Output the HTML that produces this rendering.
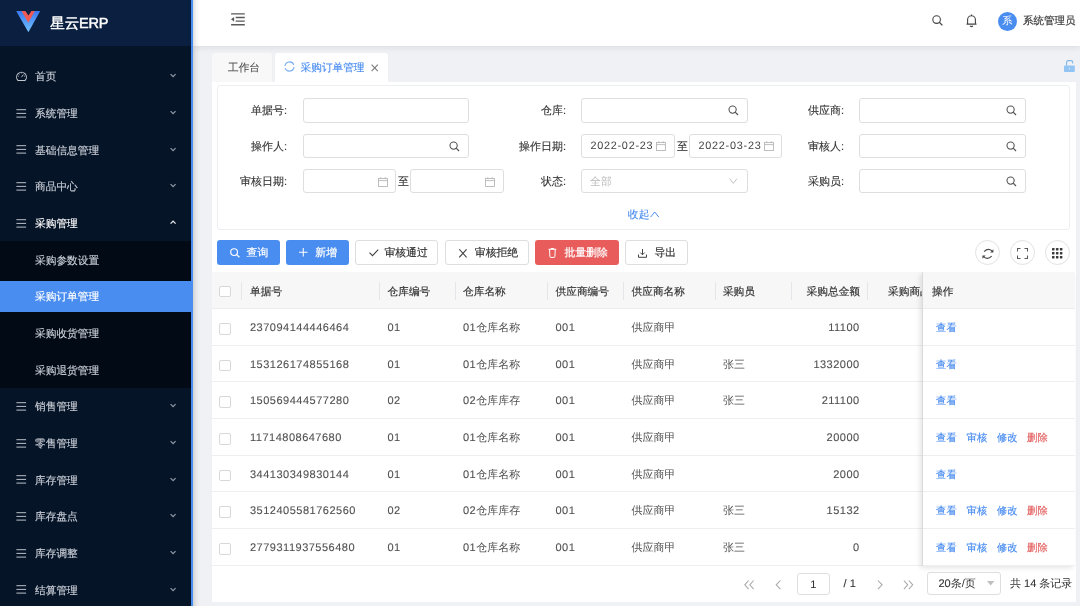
<!DOCTYPE html><html><head><meta charset="utf-8"><style>
*{box-sizing:border-box;margin:0;padding:0}
html,body{width:1080px;height:606px;overflow:hidden;background:#eff1f4;font-family:"Liberation Sans",sans-serif;color:#333;font-size:10.85px;text-rendering:geometricPrecision}
.d{letter-spacing:0.5px;font-size:11px;-webkit-text-stroke:0.1px currentColor}
.abs{position:absolute}
.nw{white-space:nowrap}
#side{position:absolute;left:0;top:0;width:191px;height:606px;background:#061428}
#logo{position:absolute;left:0;top:0;width:191px;height:46px;background:#0b1f41}
#logo .t{position:absolute;left:50.3px;top:13.6px;font-size:14.5px;line-height:20px;color:#fff;-webkit-text-stroke:0.45px #fff;white-space:nowrap;letter-spacing:-0.15px}
#bline{position:absolute;left:191px;top:0;width:2px;height:606px;background:#4a8df0}
#bshadow{position:absolute;left:193px;top:0;width:7px;height:606px;background:linear-gradient(90deg,rgba(0,0,0,0.13),rgba(0,0,0,0.04) 50%,rgba(0,0,0,0))}
.mi{position:absolute;left:0;width:191px;height:36.67px;color:#c9ced6}
.mi .ic{position:absolute;left:16px;top:14.4px}
.mi .tx{position:absolute;left:35px;top:1.7px;line-height:36.67px;font-size:10.7px;white-space:nowrap;-webkit-text-stroke:0.15px currentColor}
.mi .ch{position:absolute;left:170px;top:15.5px}
#sub{position:absolute;left:0;top:241px;width:191px;height:146.67px;background:#020a16}
#hl{position:absolute;left:0;top:281px;width:191px;height:30.5px;background:#4a8df0}
#hdr{position:absolute;left:193px;top:0;width:887px;height:46px;background:#fff;box-shadow:0 1px 7px rgba(0,0,0,0.10)}
.tab{position:absolute;top:53px;height:29px;line-height:30.4px;font-size:10.65px;border-radius:3px 3px 0 0}
#wrap{position:absolute;left:211.5px;top:82px;width:864px;height:520px;background:#fff}
#form{position:absolute;left:217px;top:85px;width:853px;height:145px;border:1px solid #eceef1;border-radius:3px;background:#fff}
.lbl{position:absolute;font-size:11px;color:#333;line-height:26.6px;white-space:nowrap;-webkit-text-stroke:0.12px #333}
.inp{position:absolute;height:24.5px;border:1px solid #dedede;border-radius:3px;background:#fff;font-size:10.85px;line-height:22px;color:#555}
.btn{position:absolute;top:240.3px;height:24.5px;border-radius:3px;font-size:10.85px;line-height:24.5px;white-space:nowrap}
.btn span{-webkit-text-stroke:0.2px currentColor}
.bp{background:#4a8df0;color:#fff}
.bd{background:#fff;border:1px solid #dedede;color:#333;line-height:22.5px}
.br{background:#e85c5c;color:#fff}
#thead{position:absolute;left:212px;top:272.2px;width:863px;height:36.8px;background:#f7f7f8;border-bottom:1px solid #ececec}
.th{position:absolute;top:1.7px;line-height:36.8px;font-size:10.7px;color:#333;-webkit-text-stroke:0.18px #333;white-space:nowrap}
.dv{position:absolute;top:9.8px;width:1px;height:17.6px;background:#e4e6ea}
.row{position:absolute;left:212px;width:863px;height:36.67px;border-bottom:1px solid #efefef;background:#fff}
.td{position:absolute;top:1px;line-height:37px;font-size:11px;color:#505050;white-space:nowrap}
.cb{position:absolute;width:12px;height:12px;border:1px solid #d8d8d8;border-radius:2px;background:#fff}
.lk{font-size:10.3px !important;color:#4a8df0;-webkit-text-stroke:0.15px #4a8df0}
.lr{font-size:10.3px !important;color:#e35b5b;-webkit-text-stroke:0.15px #e35b5b}
</style></head><body><div id="root" style="position:absolute;left:0;top:0;width:1080px;height:606px;will-change:transform">
<div id="side">
<div id="logo"><svg class="abs" style="left:16px;top:11.4px" width="25" height="22" viewBox="0 0 25 22">
<defs><linearGradient id="g1" x1="0" y1="0" x2="0" y2="1"><stop offset="0" stop-color="#3a78f0"/><stop offset="1" stop-color="#72c4ff"/></linearGradient></defs>
<path d="M0.15 0 H24.2 L12.4 21.3 Z" fill="url(#g1)"/><path d="M5.5 0 H18.85 L12.3 11.8 Z" fill="#ef5a55"/><path d="M9.4 0 H15.4 L12.4 4.4 Z" fill="#0b1f41"/></svg>
<div class="t">星云ERP</div></div>
<div id="sub"></div><div id="hl"></div>
<div class="mi" style="top:57.70px"><svg class="ic" style="top:13.2px" width="12" height="11" viewBox="0 0 12 11"><path d="M1.9 9.4A4.9 4.9 0 1 1 9.1 9.4Z" fill="none" stroke="#c4c9d1" stroke-width="1.05"/><path d="M5.5 6.2L7.4 3.5M5.5 1.3V2.3M1.8 5.2H2.8M8.2 5.2H9.2M2.9 2.6L3.5 3.2" stroke="#c4c9d1" stroke-width="0.9"/></svg><div class="tx" style="">首页</div><svg class="ch" width="7" height="5" viewBox="0 0 7 5"><path d="M0.6 1.1L3.1 3.6L5.6 1.1" fill="none" stroke="#8d96a3" stroke-width="1.3"/></svg></div>
<div class="mi" style="top:94.37px"><svg class="ic" width="11" height="10" viewBox="0 0 11 10"><path d="M0.4 0.7H10.1M0.4 4.4H10.1M0.4 8.1H10.1" stroke="#c4c9d1" stroke-width="0.95"/></svg><div class="tx" style="">系统管理</div><svg class="ch" width="7" height="5" viewBox="0 0 7 5"><path d="M0.6 1.1L3.1 3.6L5.6 1.1" fill="none" stroke="#8d96a3" stroke-width="1.3"/></svg></div>
<div class="mi" style="top:131.04px"><svg class="ic" width="11" height="10" viewBox="0 0 11 10"><path d="M0.4 0.7H10.1M0.4 4.4H10.1M0.4 8.1H10.1" stroke="#c4c9d1" stroke-width="0.95"/></svg><div class="tx" style="">基础信息管理</div><svg class="ch" width="7" height="5" viewBox="0 0 7 5"><path d="M0.6 1.1L3.1 3.6L5.6 1.1" fill="none" stroke="#8d96a3" stroke-width="1.3"/></svg></div>
<div class="mi" style="top:167.71px"><svg class="ic" width="11" height="10" viewBox="0 0 11 10"><path d="M0.4 0.7H10.1M0.4 4.4H10.1M0.4 8.1H10.1" stroke="#c4c9d1" stroke-width="0.95"/></svg><div class="tx" style="">商品中心</div><svg class="ch" width="7" height="5" viewBox="0 0 7 5"><path d="M0.6 1.1L3.1 3.6L5.6 1.1" fill="none" stroke="#8d96a3" stroke-width="1.3"/></svg></div>
<div class="mi" style="top:204.38px"><svg class="ic" width="11" height="10" viewBox="0 0 11 10"><path d="M0.4 0.7H10.1M0.4 4.4H10.1M0.4 8.1H10.1" stroke="#c4c9d1" stroke-width="0.95"/></svg><div class="tx" style="color:#fff;">采购管理</div><svg class="ch" width="7" height="5" viewBox="0 0 7 5"><path d="M0.6 3.6L3.1 1.1L5.6 3.6" fill="none" stroke="#e6e9ee" stroke-width="1.3"/></svg></div>
<div class="mi" style="top:241.05px"><div class="tx" style="">采购参数设置</div></div>
<div class="mi" style="top:277.72px"><div class="tx" style="color:#fff;">采购订单管理</div></div>
<div class="mi" style="top:314.39px"><div class="tx" style="">采购收货管理</div></div>
<div class="mi" style="top:351.06px"><div class="tx" style="">采购退货管理</div></div>
<div class="mi" style="top:387.73px"><svg class="ic" width="11" height="10" viewBox="0 0 11 10"><path d="M0.4 0.7H10.1M0.4 4.4H10.1M0.4 8.1H10.1" stroke="#c4c9d1" stroke-width="0.95"/></svg><div class="tx" style="">销售管理</div><svg class="ch" width="7" height="5" viewBox="0 0 7 5"><path d="M0.6 1.1L3.1 3.6L5.6 1.1" fill="none" stroke="#8d96a3" stroke-width="1.3"/></svg></div>
<div class="mi" style="top:424.40px"><svg class="ic" width="11" height="10" viewBox="0 0 11 10"><path d="M0.4 0.7H10.1M0.4 4.4H10.1M0.4 8.1H10.1" stroke="#c4c9d1" stroke-width="0.95"/></svg><div class="tx" style="">零售管理</div><svg class="ch" width="7" height="5" viewBox="0 0 7 5"><path d="M0.6 1.1L3.1 3.6L5.6 1.1" fill="none" stroke="#8d96a3" stroke-width="1.3"/></svg></div>
<div class="mi" style="top:461.07px"><svg class="ic" width="11" height="10" viewBox="0 0 11 10"><path d="M0.4 0.7H10.1M0.4 4.4H10.1M0.4 8.1H10.1" stroke="#c4c9d1" stroke-width="0.95"/></svg><div class="tx" style="">库存管理</div><svg class="ch" width="7" height="5" viewBox="0 0 7 5"><path d="M0.6 1.1L3.1 3.6L5.6 1.1" fill="none" stroke="#8d96a3" stroke-width="1.3"/></svg></div>
<div class="mi" style="top:497.74px"><svg class="ic" width="11" height="10" viewBox="0 0 11 10"><path d="M0.4 0.7H10.1M0.4 4.4H10.1M0.4 8.1H10.1" stroke="#c4c9d1" stroke-width="0.95"/></svg><div class="tx" style="">库存盘点</div><svg class="ch" width="7" height="5" viewBox="0 0 7 5"><path d="M0.6 1.1L3.1 3.6L5.6 1.1" fill="none" stroke="#8d96a3" stroke-width="1.3"/></svg></div>
<div class="mi" style="top:534.41px"><svg class="ic" width="11" height="10" viewBox="0 0 11 10"><path d="M0.4 0.7H10.1M0.4 4.4H10.1M0.4 8.1H10.1" stroke="#c4c9d1" stroke-width="0.95"/></svg><div class="tx" style="">库存调整</div><svg class="ch" width="7" height="5" viewBox="0 0 7 5"><path d="M0.6 1.1L3.1 3.6L5.6 1.1" fill="none" stroke="#8d96a3" stroke-width="1.3"/></svg></div>
<div class="mi" style="top:571.08px"><svg class="ic" width="11" height="10" viewBox="0 0 11 10"><path d="M0.4 0.7H10.1M0.4 4.4H10.1M0.4 8.1H10.1" stroke="#c4c9d1" stroke-width="0.95"/></svg><div class="tx" style="">结算管理</div><svg class="ch" width="7" height="5" viewBox="0 0 7 5"><path d="M0.6 1.1L3.1 3.6L5.6 1.1" fill="none" stroke="#8d96a3" stroke-width="1.3"/></svg></div>
</div>
<div id="hdr">
<svg class="abs" style="left:37.5px;top:13px" width="15" height="13" viewBox="0 0 15 13"><path d="M0.1 0.9H13.8M4.7 4.5H13.8M4.7 8.1H13.8M0.1 11.8H13.8" stroke="#5a5a5a" stroke-width="1.4"/><path d="M0 6.35L3.1 4.1V8.6Z" fill="#5a5a5a"/></svg>
<svg class="abs" style="left:738.5px;top:15.3px" width="12" height="12" viewBox="0 0 12 12"><circle cx="4.6" cy="4.6" r="3.8" fill="none" stroke="#444" stroke-width="1.1"/><path d="M7.3 7.3L10.4 10.4" stroke="#444" stroke-width="1.3"/></svg>
<svg class="abs" style="left:772.7px;top:14px" width="11" height="14" viewBox="0 0 11 14"><path d="M1.6 10V5.6A3.9 3.9 0 0 1 9.4 5.6V10ZM0.5 10.1H10.5M5.5 0.6V1.7" fill="none" stroke="#444" stroke-width="1.1"/><path d="M4.1 11.9Q5.5 13.2 6.9 11.9" fill="none" stroke="#444" stroke-width="1.2"/></svg>
<div class="abs" style="left:805px;top:12px;width:19px;height:19px;border-radius:50%;background:#4a8df0;color:#fff;font-size:10.3px;line-height:19px;text-align:center">系</div>
<div class="abs nw" style="left:830px;top:12px;line-height:19px;font-size:10.5px;color:#3a3a3a;-webkit-text-stroke:0.2px #3a3a3a">系统管理员</div>
</div>
<div id="bline"></div><div id="bshadow"></div>
<div class="tab" style="left:212px;width:59.5px;background:#f8f8f8;color:#505050"><span class="abs nw" style="left:16px;top:0.3px;-webkit-text-stroke:0.12px #505050">工作台</span></div>
<div class="tab" style="left:275px;width:113px;background:#fff;color:#4a8df0"><svg class="abs" style="left:8.6px;top:8.4px" width="11" height="11" viewBox="0 0 11 11"><path d="M0.92 5.1A4.6 4.6 0 0 1 9.82 3.93M10.08 5.9A4.6 4.6 0 0 1 1.18 7.07" fill="none" stroke="#76aaf3" stroke-width="1.05"/></svg><span class="abs nw" style="left:25.6px;top:0.3px;-webkit-text-stroke:0.15px #4a8df0">采购订单管理</span><svg class="abs" style="left:95.6px;top:10.8px" width="8" height="8" viewBox="0 0 8 8"><path d="M0.6 0.6L6.8 7.2M6.8 0.6L0.6 7.2" stroke="#7a7a7a" stroke-width="1.1"/></svg></div>
<svg class="abs" style="left:1064px;top:59.6px" width="12" height="13" viewBox="0 0 12 13"><rect x="0" y="5.4" width="10.8" height="6.6" rx="0.8" fill="#93c5f4"/><path d="M2.6 5.6V2.3Q2.6 0.6 4.3 0.6H7Q8.7 0.6 8.7 2.3V3.4" fill="none" stroke="#7fb6e8" stroke-width="1.1"/><rect x="4.9" y="7.9" width="1.1" height="1.6" fill="#d6e9fb"/></svg>
<div id="wrap"></div>
<div id="form"></div>
<div class="lbl" style="right:793.0px;top:98.4px">单据号:</div>
<div class="inp" style="left:302.5px;top:98.4px;width:166.9px"></div>
<div class="lbl" style="right:793.0px;top:133.7px">操作人:</div>
<div class="inp" style="left:302.5px;top:133.7px;width:166.9px"><svg class="abs" style="right:8px;top:6px" width="11" height="11" viewBox="0 0 11 11"><circle cx="4.6" cy="4.6" r="3.6" fill="none" stroke="#555" stroke-width="1.1"/><path d="M7.2 7.2L10 10" stroke="#555" stroke-width="1.2"/></svg></div>
<div class="lbl" style="right:793.0px;top:168.9px">审核日期:</div>
<div class="inp" style="left:302.5px;top:168.9px;width:93.9px"><svg class="abs" style="right:7.8px;top:6.8px" width="10" height="10" viewBox="0 0 10 10"><rect x="0.5" y="1.5" width="9" height="8" fill="none" stroke="#b8b8b8" stroke-width="0.9"/><path d="M0.5 3.6H9.5M2.8 0.2V2.2M7.2 0.2V2.2" stroke="#b8b8b8" stroke-width="0.9"/></svg></div>
<div class="lbl" style="left:398px;top:168.9px">至</div>
<div class="inp" style="left:410.3px;top:168.9px;width:93.9px"><svg class="abs" style="right:7.8px;top:6.8px" width="10" height="10" viewBox="0 0 10 10"><rect x="0.5" y="1.5" width="9" height="8" fill="none" stroke="#b8b8b8" stroke-width="0.9"/><path d="M0.5 3.6H9.5M2.8 0.2V2.2M7.2 0.2V2.2" stroke="#b8b8b8" stroke-width="0.9"/></svg></div>
<div class="lbl" style="right:514.0px;top:98.4px">仓库:</div>
<div class="inp" style="left:581.1px;top:98.4px;width:166.7px"><svg class="abs" style="right:8px;top:6px" width="11" height="11" viewBox="0 0 11 11"><circle cx="4.6" cy="4.6" r="3.6" fill="none" stroke="#555" stroke-width="1.1"/><path d="M7.2 7.2L10 10" stroke="#555" stroke-width="1.2"/></svg></div>
<div class="lbl" style="right:514.0px;top:133.7px">操作日期:</div>
<div class="inp" style="left:581.1px;top:133.7px;width:93.6px"><span class="abs nw" style="left:8.3px;top:0.8px;color:#444;letter-spacing:0.75px">2022-02-23</span><svg class="abs" style="right:7.8px;top:6.8px" width="10" height="10" viewBox="0 0 10 10"><rect x="0.5" y="1.5" width="9" height="8" fill="none" stroke="#b8b8b8" stroke-width="0.9"/><path d="M0.5 3.6H9.5M2.8 0.2V2.2M7.2 0.2V2.2" stroke="#b8b8b8" stroke-width="0.9"/></svg></div>
<div class="lbl" style="left:677px;top:133.7px">至</div>
<div class="inp" style="left:689.2px;top:133.7px;width:93.3px"><span class="abs nw" style="left:8.3px;top:0.8px;color:#444;letter-spacing:0.75px">2022-03-23</span><svg class="abs" style="right:7.8px;top:6.8px" width="10" height="10" viewBox="0 0 10 10"><rect x="0.5" y="1.5" width="9" height="8" fill="none" stroke="#b8b8b8" stroke-width="0.9"/><path d="M0.5 3.6H9.5M2.8 0.2V2.2M7.2 0.2V2.2" stroke="#b8b8b8" stroke-width="0.9"/></svg></div>
<div class="lbl" style="right:514.0px;top:168.9px">状态:</div>
<div class="inp" style="left:581.1px;top:168.9px;width:166.7px"><span class="abs nw" style="left:8px;top:0.8px;color:#bbb">全部</span><svg class="abs" style="right:9px;top:8.2px" width="9" height="7" viewBox="0 0 9 7"><path d="M0.6 0.6L4.3 5.4L8 0.6" fill="none" stroke="#bbb" stroke-width="0.9"/></svg></div>
<div class="lbl" style="right:236.0px;top:98.4px">供应商:</div>
<div class="inp" style="left:859.2px;top:98.4px;width:167.3px"><svg class="abs" style="right:8px;top:6px" width="11" height="11" viewBox="0 0 11 11"><circle cx="4.6" cy="4.6" r="3.6" fill="none" stroke="#555" stroke-width="1.1"/><path d="M7.2 7.2L10 10" stroke="#555" stroke-width="1.2"/></svg></div>
<div class="lbl" style="right:236.0px;top:133.7px">审核人:</div>
<div class="inp" style="left:859.2px;top:133.7px;width:167.3px"><svg class="abs" style="right:8px;top:6px" width="11" height="11" viewBox="0 0 11 11"><circle cx="4.6" cy="4.6" r="3.6" fill="none" stroke="#555" stroke-width="1.1"/><path d="M7.2 7.2L10 10" stroke="#555" stroke-width="1.2"/></svg></div>
<div class="lbl" style="right:236.0px;top:168.9px">采购员:</div>
<div class="inp" style="left:859.2px;top:168.9px;width:167.3px"><svg class="abs" style="right:8px;top:6px" width="11" height="11" viewBox="0 0 11 11"><circle cx="4.6" cy="4.6" r="3.6" fill="none" stroke="#555" stroke-width="1.1"/><path d="M7.2 7.2L10 10" stroke="#555" stroke-width="1.2"/></svg></div>
<div class="abs nw" style="left:627.8px;top:207.2px;line-height:16px;color:#4a8df0;font-size:10.85px;-webkit-text-stroke:0.1px #4a8df0">收起</div><svg class="abs" style="left:649.8px;top:210.8px" width="10" height="7" viewBox="0 0 10 7"><path d="M0.5 6.2L4.7 1L8.9 6.2" fill="none" stroke="#4a8df0" stroke-width="1"/></svg>
<div class="btn bp" style="left:217.4px;width:62.5px"><svg class="abs" style="left:12.5px;top:7.8px" width="11" height="10" viewBox="0 0 11 10"><circle cx="4.1" cy="4.1" r="3.4" fill="none" stroke="#fff" stroke-width="1.15"/><path d="M6.6 6.6L9.4 9.3" stroke="#fff" stroke-width="1.25"/></svg><span class="abs" style="left:29.2px;top:0.8px">查询</span></div>
<div class="btn bp" style="left:286.1px;width:62.5px"><svg class="abs" style="left:13.2px;top:7.9px" width="9" height="9" viewBox="0 0 9 9"><path d="M4.25 0V8.5M0 4.25H8.5" stroke="#fff" stroke-width="1.05"/></svg><span class="abs" style="left:29.2px;top:0.8px">新增</span></div>
<div class="btn bd" style="left:355.0px;width:83.4px"><svg class="abs" style="left:12.5px;top:7.5px" width="10" height="8" viewBox="0 0 10 8"><path d="M0.5 3.6L3.5 6.6L9.2 0.6" fill="none" stroke="#444" stroke-width="1.1"/></svg><span class="abs" style="left:28.4px;top:0.8px">审核通过</span></div>
<div class="btn bd" style="left:445.4px;width:83.3px"><svg class="abs" style="left:12.4px;top:7.5px" width="8" height="9" viewBox="0 0 8 9"><path d="M0.3 0.3L7.6 8.3M7.6 0.3L0.3 8.3" stroke="#444" stroke-width="1.05"/></svg><span class="abs" style="left:28.4px;top:0.8px">审核拒绝</span></div>
<div class="btn br" style="left:535.2px;width:83.8px"><svg class="abs" style="left:13px;top:8px" width="9" height="10" viewBox="0 0 9 10"><path d="M0.5 1.3H8.3M1.6 1.3L1.9 8.7Q2 9.4 2.7 9.4H6.1Q6.8 9.4 6.9 8.7L7.2 1.3M3 1.3V0.5H5.8V1.3" fill="none" stroke="#fff" stroke-width="1"/></svg><span class="abs" style="left:29.2px;top:0.8px">批量删除</span></div>
<div class="btn bd" style="left:625.0px;width:62.5px"><svg class="abs" style="left:12px;top:7.6px" width="10" height="9" viewBox="0 0 10 9"><path d="M4.5 0V5.6M2.3 3.6L4.5 5.8L6.7 3.6M0.5 5.5V8.3H8.5V5.5" fill="none" stroke="#444" stroke-width="1"/></svg><span class="abs" style="left:28.5px;top:0.8px">导出</span></div>
<div class="abs" style="left:974.8px;top:240px;width:25px;height:25px;border:1px solid #e2e2e2;border-radius:50%"><div class="abs" style="left:11.5px;top:11.5px"><svg class="abs" style="left:-5.3px;top:-4.9px" width="13" height="13" viewBox="0 0 13 13"><path d="M2.1 3.7Q6 -0.4 10 2.9M9.7 8.1Q5.8 12.2 1.8 8.9" fill="none" stroke="#4a4a4a" stroke-width="1.15"/><path d="M11.4 1.2V4.5H8.1ZM0.4 10.8V7.5H3.7Z" fill="#4a4a4a"/></svg></div></div>
<div class="abs" style="left:1010.0px;top:240px;width:25px;height:25px;border:1px solid #e2e2e2;border-radius:50%"><div class="abs" style="left:11.5px;top:11.5px"><svg class="abs" style="left:-5.5px;top:-4.6px" width="12" height="12" viewBox="0 0 12 12"><path d="M0.5 3.5V0.5H3.5M7.5 0.5H10.5V3.5M10.5 7.5V10.5H7.5M3.5 10.5H0.5V7.5" fill="none" stroke="#5a5a5a" stroke-width="1.05"/></svg></div></div>
<div class="abs" style="left:1044.5px;top:240px;width:25px;height:25px;border:1px solid #e2e2e2;border-radius:50%"><div class="abs" style="left:11.5px;top:11.5px"><svg class="abs" style="left:-5.4px;top:-5.0px" width="11" height="11" viewBox="0 0 11 11"><rect x="0.00" y="0.00" width="2.5" height="2.5" rx="0.4" fill="#3a3a3a"/><rect x="0.00" y="3.95" width="2.5" height="2.5" rx="0.4" fill="#3a3a3a"/><rect x="0.00" y="7.90" width="2.5" height="2.5" rx="0.4" fill="#3a3a3a"/><rect x="3.95" y="0.00" width="2.5" height="2.5" rx="0.4" fill="#3a3a3a"/><rect x="3.95" y="3.95" width="2.5" height="2.5" rx="0.4" fill="#3a3a3a"/><rect x="3.95" y="7.90" width="2.5" height="2.5" rx="0.4" fill="#3a3a3a"/><rect x="7.90" y="0.00" width="2.5" height="2.5" rx="0.4" fill="#3a3a3a"/><rect x="7.90" y="3.95" width="2.5" height="2.5" rx="0.4" fill="#3a3a3a"/><rect x="7.90" y="7.90" width="2.5" height="2.5" rx="0.4" fill="#3a3a3a"/></svg></div></div>
<div id="thead">
<div class="cb" style="left:7.2px;top:13.6px;width:11.6px;height:11.6px"></div>
<div class="dv" style="left:29.2px"></div>
<div class="dv" style="left:166.9px"></div>
<div class="dv" style="left:242.8px"></div>
<div class="dv" style="left:335.3px"></div>
<div class="dv" style="left:411.0px"></div>
<div class="dv" style="left:503.2px"></div>
<div class="dv" style="left:579.0px"></div>
<div class="dv" style="left:655.2px"></div>
<div class="th" style="left:38.0px">单据号</div>
<div class="th" style="left:175.5px">仓库编号</div>
<div class="th" style="left:251.0px">仓库名称</div>
<div class="th" style="left:343.5px">供应商编号</div>
<div class="th" style="left:419.5px">供应商名称</div>
<div class="th" style="left:510.9px">采购员</div>
<div class="th" style="right:215.0px">采购总金额</div>
<div class="th" style="left:676.0px">采购商品</div>
</div>
<div class="row" style="top:309.00px"><div class="cb" style="left:7.2px;top:14px;width:11.6px;height:11.6px"></div><div class="td" style="left:38.0px"><span class="d">237094144446464</span></div><div class="td" style="left:175.5px"><span class="d">01</span></div><div class="td" style="left:251.0px"><span class="d">01</span>仓库名称</div><div class="td" style="left:343.5px"><span class="d">001</span></div><div class="td" style="left:419.5px">供应商甲</div><div class="td" style="left:510.9px"></div><div class="td d" style="right:215.3px">11100</div></div>
<div class="row" style="top:345.67px"><div class="cb" style="left:7.2px;top:14px;width:11.6px;height:11.6px"></div><div class="td" style="left:38.0px"><span class="d">153126174855168</span></div><div class="td" style="left:175.5px"><span class="d">01</span></div><div class="td" style="left:251.0px"><span class="d">01</span>仓库名称</div><div class="td" style="left:343.5px"><span class="d">001</span></div><div class="td" style="left:419.5px">供应商甲</div><div class="td" style="left:510.9px">张三</div><div class="td d" style="right:215.3px">1332000</div></div>
<div class="row" style="top:382.34px"><div class="cb" style="left:7.2px;top:14px;width:11.6px;height:11.6px"></div><div class="td" style="left:38.0px"><span class="d">150569444577280</span></div><div class="td" style="left:175.5px"><span class="d">02</span></div><div class="td" style="left:251.0px"><span class="d">02</span>仓库库存</div><div class="td" style="left:343.5px"><span class="d">001</span></div><div class="td" style="left:419.5px">供应商甲</div><div class="td" style="left:510.9px">张三</div><div class="td d" style="right:215.3px">211100</div></div>
<div class="row" style="top:419.01px"><div class="cb" style="left:7.2px;top:14px;width:11.6px;height:11.6px"></div><div class="td" style="left:38.0px"><span class="d">11714808647680</span></div><div class="td" style="left:175.5px"><span class="d">01</span></div><div class="td" style="left:251.0px"><span class="d">01</span>仓库名称</div><div class="td" style="left:343.5px"><span class="d">001</span></div><div class="td" style="left:419.5px">供应商甲</div><div class="td" style="left:510.9px"></div><div class="td d" style="right:215.3px">20000</div></div>
<div class="row" style="top:455.68px"><div class="cb" style="left:7.2px;top:14px;width:11.6px;height:11.6px"></div><div class="td" style="left:38.0px"><span class="d">344130349830144</span></div><div class="td" style="left:175.5px"><span class="d">01</span></div><div class="td" style="left:251.0px"><span class="d">01</span>仓库名称</div><div class="td" style="left:343.5px"><span class="d">001</span></div><div class="td" style="left:419.5px">供应商甲</div><div class="td" style="left:510.9px"></div><div class="td d" style="right:215.3px">2000</div></div>
<div class="row" style="top:492.35px"><div class="cb" style="left:7.2px;top:14px;width:11.6px;height:11.6px"></div><div class="td" style="left:38.0px"><span class="d">3512405581762560</span></div><div class="td" style="left:175.5px"><span class="d">02</span></div><div class="td" style="left:251.0px"><span class="d">02</span>仓库库存</div><div class="td" style="left:343.5px"><span class="d">001</span></div><div class="td" style="left:419.5px">供应商甲</div><div class="td" style="left:510.9px">张三</div><div class="td d" style="right:215.3px">15132</div></div>
<div class="row" style="top:529.02px"><div class="cb" style="left:7.2px;top:14px;width:11.6px;height:11.6px"></div><div class="td" style="left:38.0px"><span class="d">2779311937556480</span></div><div class="td" style="left:175.5px"><span class="d">01</span></div><div class="td" style="left:251.0px"><span class="d">01</span>仓库名称</div><div class="td" style="left:343.5px"><span class="d">001</span></div><div class="td" style="left:419.5px">供应商甲</div><div class="td" style="left:510.9px">张三</div><div class="td d" style="right:215.3px">0</div></div>
<div class="abs" style="left:922px;top:272.2px;width:153px;height:293.5px;box-shadow:-2px 2px 5px rgba(0,0,0,0.10);border-left:1px solid #dadada;clip-path:inset(0 -12px -12px -12px)"></div>
<div class="abs" style="left:922.7px;top:272.2px;width:152.3px;height:36.8px;background:#f7f7f8;border-bottom:1px solid #ececec"><div class="th" style="left:9.3px">操作</div></div>
<div class="abs" style="left:922.7px;top:309.00px;width:152.3px;height:36.67px;background:#fff;border-bottom:1px solid #efefef"><div class="td lk" style="left:13.4px">查看</div></div>
<div class="abs" style="left:922.7px;top:345.67px;width:152.3px;height:36.67px;background:#fff;border-bottom:1px solid #efefef"><div class="td lk" style="left:13.4px">查看</div></div>
<div class="abs" style="left:922.7px;top:382.34px;width:152.3px;height:36.67px;background:#fff;border-bottom:1px solid #efefef"><div class="td lk" style="left:13.4px">查看</div></div>
<div class="abs" style="left:922.7px;top:419.01px;width:152.3px;height:36.67px;background:#fff;border-bottom:1px solid #efefef"><div class="td lk" style="left:13.4px">查看</div><div class="td lk" style="left:43.9px">审核</div><div class="td lk" style="left:74.3px">修改</div><div class="td lr" style="left:104.4px">删除</div></div>
<div class="abs" style="left:922.7px;top:455.68px;width:152.3px;height:36.67px;background:#fff;border-bottom:1px solid #efefef"><div class="td lk" style="left:13.4px">查看</div></div>
<div class="abs" style="left:922.7px;top:492.35px;width:152.3px;height:36.67px;background:#fff;border-bottom:1px solid #efefef"><div class="td lk" style="left:13.4px">查看</div><div class="td lk" style="left:43.9px">审核</div><div class="td lk" style="left:74.3px">修改</div><div class="td lr" style="left:104.4px">删除</div></div>
<div class="abs" style="left:922.7px;top:529.02px;width:152.3px;height:36.67px;background:#fff;border-bottom:1px solid #efefef"><div class="td lk" style="left:13.4px">查看</div><div class="td lk" style="left:43.9px">审核</div><div class="td lk" style="left:74.3px">修改</div><div class="td lr" style="left:104.4px">删除</div></div>
<svg class="abs" style="left:744px;top:579.5px" width="11" height="10" viewBox="0 0 11 10"><path d="M4.6 0.5L0.8 4.8L4.6 9.1M9.6 0.5L5.8 4.8L9.6 9.1" fill="none" stroke="#a8a8a8" stroke-width="1.05"/></svg>
<svg class="abs" style="left:774.5px;top:579.5px" width="7" height="10" viewBox="0 0 7 10"><path d="M5.4 0.5L1.2 4.8L5.4 9.1" fill="none" stroke="#a8a8a8" stroke-width="1.05"/></svg>
<div class="abs" style="left:796.5px;top:572.5px;width:33.5px;height:22.8px;border:1px solid #dedede;border-radius:3px;text-align:center;line-height:22.4px;font-size:11px;color:#333"><span class="d" style="letter-spacing:0">1</span></div>
<div class="abs nw" style="left:843.6px;top:573px;line-height:23px;font-size:11px;color:#333"><span class="d" style="letter-spacing:0">/ 1</span></div>
<svg class="abs" style="left:877px;top:579.5px" width="7" height="10" viewBox="0 0 7 10"><path d="M0.9 0.5L5.1 4.8L0.9 9.1" fill="none" stroke="#a8a8a8" stroke-width="1.05"/></svg>
<svg class="abs" style="left:903px;top:579.5px" width="11" height="10" viewBox="0 0 11 10"><path d="M0.9 0.5L4.7 4.8L0.9 9.1M5.9 0.5L9.7 4.8L5.9 9.1" fill="none" stroke="#a8a8a8" stroke-width="1.05"/></svg>
<div class="abs" style="left:927.4px;top:572.2px;width:74px;height:22.8px;border:1px solid #dedede;border-radius:3px;font-size:11px;line-height:22.4px;color:#333"><span class="abs nw" style="left:10px;top:0.3px"><span class="d" style="letter-spacing:0">20</span>条/页</span><svg class="abs" style="left:59px;top:7.7px" width="8" height="5" viewBox="0 0 8 5"><path d="M0 0H7.4L3.7 4.4Z" fill="#c0c0c0"/></svg></div>
<div class="abs nw" style="left:1010px;top:573px;line-height:23px;font-size:11px;color:#333">共 <span class="d" style="letter-spacing:0">14</span> 条记录</div>
</div></body></html>
